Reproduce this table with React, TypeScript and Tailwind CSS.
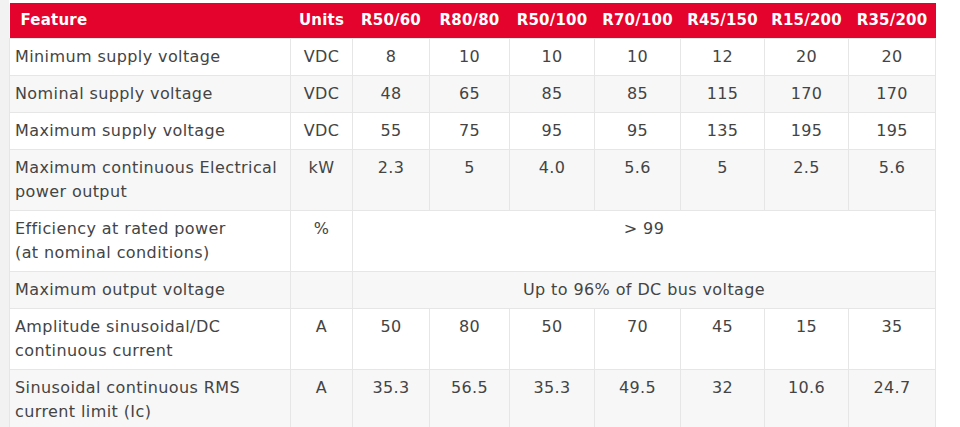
const models = ["R50/60", "R80/80", "R50/100", "R70/100", "R45/150", "R15/200", "R35/200"];

type Row = { feature: string[]; unit: string; values?: string[]; span?: string };

const rows: Row[] = [
  { feature: ["Minimum supply voltage"], unit: "VDC", values: ["8", "10", "10", "10", "12", "20", "20"] },
  { feature: ["Nominal supply voltage"], unit: "VDC", values: ["48", "65", "85", "85", "115", "170", "170"] },
  { feature: ["Maximum supply voltage"], unit: "VDC", values: ["55", "75", "95", "95", "135", "195", "195"] },
  { feature: ["Maximum continuous Electrical", "power output"], unit: "kW", values: ["2.3", "5", "4.0", "5.6", "5", "2.5", "5.6"] },
  { feature: ["Efficiency at rated power", "(at nominal conditions)"], unit: "%", span: "> 99" },
  { feature: ["Maximum output voltage"], unit: "", span: "Up to 96% of DC bus voltage" },
  { feature: ["Amplitude sinusoidal/DC", "continuous current"], unit: "A", values: ["50", "80", "50", "70", "45", "15", "35"] },
  { feature: ["Sinusoidal continuous RMS", "current limit (Ic)"], unit: "A", values: ["35.3", "56.5", "35.3", "49.5", "32", "10.6", "24.7"] },
];

const widths = [281, 62, 77, 80, 85, 86, 84, 84, 87];

export default function App() {
  return (
    <div className="flex h-[427px] w-[960px] overflow-hidden bg-white" style={{ fontFamily: '"DejaVu Sans", sans-serif' }}>
      <div className="w-[9px] shrink-0 bg-[#f2f2f2]" />
      <div className="pt-[3px]">
        <table className="w-[926px] table-fixed border-collapse text-[16px] leading-6 tracking-[0.4px] text-[#444]">
          <colgroup>
            {widths.map((w, i) => (
              <col key={i} style={{ width: w }} />
            ))}
          </colgroup>
          <thead>
            <tr className="h-[35px] bg-[#e4032c] text-[15px] font-bold tracking-[0.2px] text-white">
              <th className="pl-[11px] text-left">Feature</th>
              <th className="text-center">Units</th>
              {models.map((m) => (
                <th key={m} className="text-center">{m}</th>
              ))}
            </tr>
          </thead>
          <tbody>
            {rows.map((r, i) => (
              <tr key={i} className={i % 2 === 1 ? "bg-[#f7f7f7]" : "bg-white"}>
                <td className="border border-[#e6e6e6] px-[5px] pt-[6px] pb-[6px] align-top">
                  {r.feature.map((l) => (
                    <div key={l}>{l}</div>
                  ))}
                </td>
                <td className="border border-[#e6e6e6] pt-[6px] text-center align-top">{r.unit}</td>
                {r.span ? (
                  <td colSpan={7} className="border border-[#e6e6e6] pt-[6px] text-center align-top">{r.span}</td>
                ) : (
                  r.values!.map((v, j) => (
                    <td key={j} className="border border-[#e6e6e6] pt-[6px] text-center align-top">{v}</td>
                  ))
                )}
              </tr>
            ))}
          </tbody>
        </table>
      </div>
    </div>
  );
}
